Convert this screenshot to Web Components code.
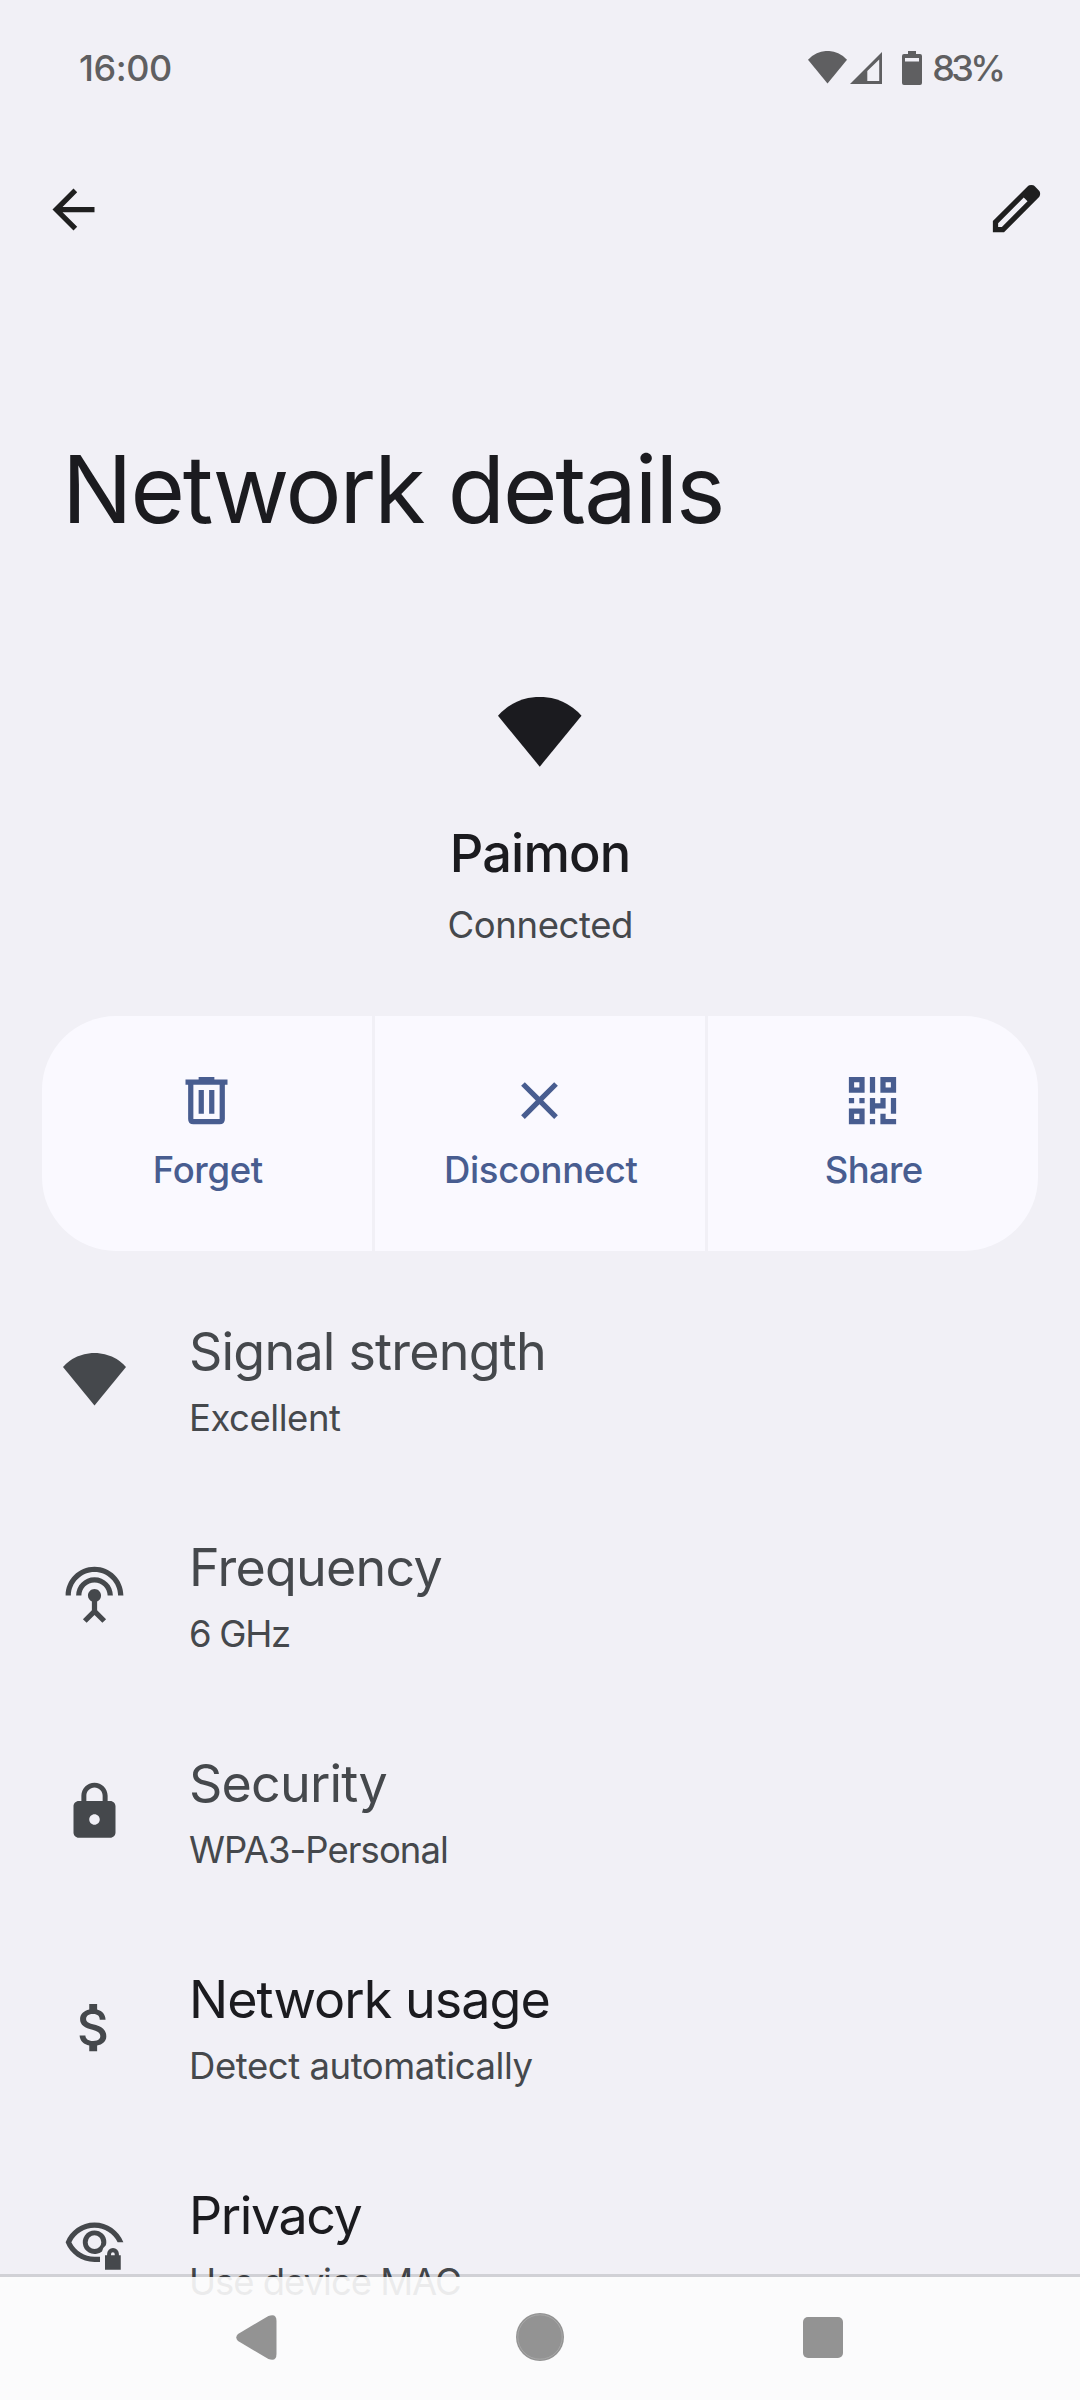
<!DOCTYPE html>
<html lang="en">
<head>
<meta charset="utf-8">
<title>Network details</title>
<style>
  html, body {
    margin: 0;
    background: #f1f0f6;
  }
  body {
    width: 1080px;
    height: 2400px;
    overflow: hidden;
    font-family: Inter, "Open Sans", sans-serif;
    color: #1b1b1f;
  }
</style>
</head>
<body>
<network-page></network-page>

<script>
(function () {
  const icons = {
    fan: ['0 0 24 20', '<path d="M12 20L0 5.38A16 16 0 0 1 24 5.38Z"/>'],
    signal: ['0 0 32 32', '<path fill-rule="evenodd" d="M0 32L32 0V32ZM17.3 29H29.2V7.4L17.3 19Z"/>'],
    battery: ['0 0 20 34', '<path fill-rule="evenodd" d="M6 0H14V3H18Q20 3 20 5V32Q20 34 18 34H2Q0 34 0 32V5Q0 3 2 3H6ZM3 7V10.6H17V7Z"/>'],
    back: ['0 0 24 24', '<path d="M20 11H7.83l5.58-5.59L12 4l-8 8 8 8 1.41-1.41L7.83 13H20z"/>'],
    edit: ['0 0 24 24', '<path fill-rule="evenodd" d="M5 19h1.425L16.2 9.225 14.775 7.8 5 17.575zM3 21v-4.25L16.2 3.575q.3-.275.663-.425t.762-.15.775.15.65.45L20.425 5q.3.275.438.65T21 6.4q0 .4-.137.763t-.438.662L7.25 21z"/>'],
    trash: ['0 0 24 24', '<path fill-rule="evenodd" d="M9 3h6v1h5v2h-1v13q0 2-2 2H7q-2 0-2-2V6H4V4h5zM7 6v13h10V6zM9 8h2v9H9zM13 8h2v9h-2z"/>'],
    close: ['0 0 24 24', '<path d="M19 6.41L17.59 5 12 10.59 6.41 5 5 6.41 10.59 12 5 17.59 6.41 19 12 13.41 17.59 19 19 17.59 13.41 12z"/>'],
    qr: ['0 0 24 24', '<path fill-rule="evenodd" d="M3 3h6v6H3zM5 5v2h2V5zM15 3h6v6h-6zM17 5v2h2V5zM3 15h6v6H3zM5 17v2h2v-2zM11 3h2v6h-2zM3 11h2v2H3zM7 11h2v2H7zM11 11h2v2h2v-2h2v4h-4v2h-2zM19 11h2v6h-2zM11 19h2v2h-2zM15 17h2v2h4v2h-6z"/>'],
    antenna: ['0 0 24 24', '<path d="M12 5c-3.87 0-7 3.13-7 7h2c0-2.76 2.24-5 5-5s5 2.24 5 5h2c0-3.87-3.13-7-7-7zm1 9.29c.88-.39 1.5-1.26 1.5-2.29 0-1.38-1.12-2.5-2.5-2.5S9.5 10.62 9.5 12c0 1.02.62 1.9 1.5 2.29v3.3L7.59 21 9 22.41l3-3 3 3L16.41 21 13 17.59v-3.3zM12 1C5.93 1 1 5.93 1 12h2c0-4.97 4.03-9 9-9s9 4.03 9 9h2c0-6.07-4.93-11-11-11z"/>'],
    lock: ['0 0 24 24', '<path d="M18 8h-1V6c0-2.76-2.24-5-5-5S7 3.24 7 6v2H6c-1.1 0-2 .9-2 2v10c0 1.1.9 2 2 2h12c1.1 0 2-.9 2-2V10c0-1.1-.9-2-2-2zm-6 9c-1.1 0-2-.9-2-2s.9-2 2-2 2 .9 2 2-.9 2-2 2zm3.1-9H8.9V6c0-1.71 1.39-3.1 3.1-3.1s3.1 1.39 3.1 3.1v2z"/>'],
    dollar: ['0 0 24 24', '<path d="M11.8 10.9c-2.27-.59-3-1.2-3-2.15 0-1.09 1.01-1.85 2.7-1.85 1.78 0 2.44.85 2.5 2.1h2.21c-.07-1.72-1.12-3.3-3.21-3.81V3h-3v2.16c-1.94.42-3.5 1.68-3.5 3.61 0 2.31 1.91 3.46 4.7 4.13 2.5.6 3 1.48 3 2.41 0 .69-.49 1.79-2.7 1.79-2.06 0-2.87-.92-2.98-2.1h-2.2c.12 2.19 1.76 3.42 3.68 3.83V21h3v-2.15c1.95-.37 3.5-1.5 3.5-3.55 0-2.84-2.43-3.81-4.7-4.4z"/>'],
    privacy: ['0 0 24 24', '<path d="M12 4C7 4 2.73 7.11 1 11.5 2.73 15.89 7 19 12 19h2.1v-2H12c-3.79 0-7.17-2.13-8.82-5.5C4.83 8.13 8.21 6 12 6s7.17 2.13 8.82 5.5H23C21.27 7.11 17 4 12 4z"/><path fill-rule="evenodd" d="M12 7a4.5 4.5 0 0 1 4.5 4.5q0 .7-.25 1.3-1.2.9-1.4 2.2A4.5 4.5 0 1 1 12 7zm0 1.9a2.6 2.6 0 1 0 0 5.200 2.6 2.6 0 0 0 0-5.200z"/><path fill-rule="evenodd" d="M16 16.5h.8V16a2.25 2.25 0 0 1 4.5 0v.5h.7V22h-6zm2.3 0h1.4V16a.7.7 0 0 0-1.4 0z"/>'],
    navBack: ['0 0 40 45', '<path d="M2 19L32 1Q40-2 40 6V39Q40 47 32 44L2 26Q-1.5 22.500 2 19Z"/>'],
    navHome: ['0 0 48 48', '<circle cx="24" cy="24" r="24"/><circle cx="24" cy="24" r="22.200" fill="none" stroke="#b4b4b4" stroke-width=".6"/>'],
    navRecent: ['0 0 40 41', '<rect width="40" height="41" rx="5"/>']
  };

  // <ui-icon name="..."> is sized by whoever places it
  class UiIcon extends HTMLElement {
    constructor() {
      super();
      this.attachShadow({ mode: 'open' });
    }

    connectedCallback() {
      const [box, shape] = icons[this.getAttribute('name')];
      this.shadowRoot.innerHTML = `
        <style>
          :host { display: block; flex: none; }
          svg { display: block; width: 100%; height: 100%; fill: currentColor; }
        </style>
        <svg viewBox="${box}" preserveAspectRatio="none">${shape}</svg>
      `;
    }
  }

  // Tracks its text so that the glyphs span the given width
  class FitText extends HTMLElement {
    constructor() {
      super();
      this.attachShadow({ mode: 'open' }).innerHTML = `
        <style>:host { display: block; white-space: nowrap; }</style>
        <slot></slot>
      `;
    }

    connectedCallback() {
      const text = this.textContent;
      const style = getComputedStyle(this);
      const ctx = document.createElement('canvas').getContext('2d');
      ctx.font = `${style.fontWeight} ${style.fontSize} ${style.fontFamily}`;
      const m = ctx.measureText(text);
      const natural = m.actualBoundingBoxRight + m.actualBoundingBoxLeft;
      const spacing = (Number(this.getAttribute('span')) - natural) / (text.length - 1);
      this.style.letterSpacing = spacing + 'px';
      this.style.marginRight = -spacing + 'px';
    }
  }

  class StatusBar extends HTMLElement {
    constructor() {
      super();
      this.attachShadow({ mode: 'open' }).innerHTML = `
        <style>
          :host {
            display: flex;
            align-items: center;
            height: 136px;
            box-sizing: border-box;
            padding: 0 74px 0 79px;
            font-size: 36px;
            font-weight: 500;
            line-height: 44px;
            color: #5f5f61;
          }
          .right { display: flex; align-items: center; margin-left: auto; }
          .wifi { width: 39px; height: 32.500px; margin-right: 3.500px; }
          .cell { width: 32px; height: 32px; margin-right: 19.500px; }
          .battery { width: 20px; height: 34px; margin-right: 10.500px; }
          .right ui-icon { margin-top: -1px; }
          .right fit-text { margin-top: -1px; }
        </style>
        <fit-text span="91">16:00</fit-text>
        <div class="right">
          <ui-icon class="wifi" name="fan"></ui-icon>
          <ui-icon class="cell" name="signal"></ui-icon>
          <ui-icon class="battery" name="battery"></ui-icon>
          <fit-text span="69">83%</fit-text>
        </div>
      `;
    }
  }

  class TopBar extends HTMLElement {
    constructor() {
      super();
      this.attachShadow({ mode: 'open' }).innerHTML = `
        <style>
          :host { display: block; color: #1f1f1f; }
          .tools {
            display: flex;
            align-items: center;
            justify-content: space-between;
            height: 147px;
            padding: 0 32px 0 42px;
          }
          .tools ui-icon { width: 63px; height: 63px; }
          .edit { margin-top: -2px; }
          h1 {
            margin: 151px 0 -1px 62px;
            font-size: 93.500px;
            font-weight: 400;
            line-height: 110px;
            color: #1b1b1f;
          }
        </style>
        <div class="tools">
          <ui-icon name="back"></ui-icon>
          <ui-icon class="edit" name="edit"></ui-icon>
        </div>
        <h1><fit-text span="651">Network details</fit-text></h1>
      `;
    }
  }

  class NetworkHeader extends HTMLElement {
    constructor() {
      super();
      this.attachShadow({ mode: 'open' }).innerHTML = `
        <style>
          :host {
            display: flex;
            flex-direction: column;
            align-items: center;
            box-sizing: border-box;
            height: 473px;
            padding-top: 154px;
          }
          ui-icon { width: 83.500px; height: 69.700px; }
          .name { margin: 54px 0 0 1px; font-size: 52.300px; font-weight: 500; line-height: 64px; }
          .state { margin: 17px 0 0 1px; font-size: 36.500px; line-height: 46px; color: #45484c; }
        </style>
        <ui-icon name="fan"></ui-icon>
        <div class="name"><fit-text span="174">Paimon</fit-text></div>
        <div class="state"><fit-text span="181.500">Connected</fit-text></div>
      `;
    }
  }

  class ActionButton extends HTMLElement {
    constructor() {
      super();
      this.attachShadow({ mode: 'open' });
    }

    connectedCallback() {
      this.shadowRoot.innerHTML = `
        <style>
          :host {
            display: flex;
            flex-direction: column;
            align-items: center;
            box-sizing: border-box;
            padding: 53px 0 0 2px;
            background: #faf9ff;
            color: #485d90;
            font-size: 36.500px;
            font-weight: 500;
            line-height: 44px;
          }
          ui-icon { width: 63px; height: 63px; margin: 0 3px 15.700px 0; }
        </style>
        <ui-icon name="${this.getAttribute('icon')}"></ui-icon>
        <slot></slot>
      `;
    }
  }

  class ActionBar extends HTMLElement {
    constructor() {
      super();
      this.attachShadow({ mode: 'open' }).innerHTML = `
        <style>
          :host {
            display: grid;
            grid-template-columns: repeat(3, 1fr);
            gap: 3px;
            height: 235px;
            margin: 0 42px;
            border-radius: 74px;
            overflow: hidden;
          }
        </style>
        <slot></slot>
      `;
    }
  }

  class PreferenceRow extends HTMLElement {
    constructor() {
      super();
      this.attachShadow({ mode: 'open' });
    }

    connectedCallback() {
      const wifi = this.getAttribute('icon') === 'fan';
      this.shadowRoot.innerHTML = `
        <style>
          :host {
            display: flex;
            align-items: center;
            gap: 63px;
            height: 216px;
            padding-left: 63px;
            color: #45484c;
          }
          ui-icon { width: 63px; height: ${wifi ? 52.5 : 63}px; margin-top: -1px; }
          .text { padding-top: 2px; }
          .title { font-size: 52px; line-height: 62px; }
          .summary { margin-top: 12.400px; font-size: 36.500px; line-height: 46px; }
          :host([active]) .title { color: #1b1b1f; }
        </style>
        <ui-icon name="${this.getAttribute('icon')}"></ui-icon>
        <div class="text">
          <div class="title"><slot name="title"></slot></div>
          <div class="summary"><slot></slot></div>
        </div>
      `;
    }
  }

  class NavBar extends HTMLElement {
    constructor() {
      super();
      this.attachShadow({ mode: 'open' }).innerHTML = `
        <style>
          :host {
            position: absolute;
            left: 0;
            top: 2274px;
            width: 1080px;
            height: 126px;
            box-sizing: border-box;
            border-top: 3px solid rgba(0, 0, 0, .13);
            background: rgba(252, 252, 252, .91);
            background-clip: padding-box;
            display: flex;
            align-items: center;
            justify-content: space-between;
            padding: 0 237px 3px 236px;
            color: #939393;
          }
          .back { width: 40.500px; height: 45px; }
          .home { width: 48px; height: 48px; }
          .recent { width: 40px; height: 41px; }
        </style>
        <ui-icon class="back" name="navBack"></ui-icon>
        <ui-icon class="home" name="navHome"></ui-icon>
        <ui-icon class="recent" name="navRecent"></ui-icon>
      `;
    }
  }

  class NetworkPage extends HTMLElement {
    constructor() {
      super();
      this.attachShadow({ mode: 'open' }).innerHTML = `
        <style>
          :host {
            display: block;
            position: relative;
            width: 1080px;
            height: 2400px;
            overflow: hidden;
          }
          .list { margin-top: 21px; }
        </style>
        <status-bar></status-bar>
        <top-bar></top-bar>
        <network-header></network-header>
        <action-bar>
          <action-button icon="trash"><fit-text span="108">Forget</fit-text></action-button>
          <action-button icon="close"><fit-text span="191.500">Disconnect</fit-text></action-button>
          <action-button icon="qr"><fit-text span="96">Share</fit-text></action-button>
        </action-bar>
        <div class="list">
          <preference-row icon="fan">
            <fit-text slot="title" span="352">Signal strength</fit-text>
            <fit-text span="149">Excellent</fit-text>
          </preference-row>
          <preference-row icon="antenna">
            <fit-text slot="title" span="248.500">Frequency</fit-text>
            <fit-text span="98">6 GHz</fit-text>
          </preference-row>
          <preference-row icon="lock">
            <fit-text slot="title" span="195.500">Security</fit-text>
            <fit-text span="258">WPA3-Personal</fit-text>
          </preference-row>
          <preference-row icon="dollar" active>
            <fit-text slot="title" span="355.500">Network usage</fit-text>
            <fit-text span="340.500">Detect automatically</fit-text>
          </preference-row>
          <preference-row icon="privacy" active>
            <fit-text slot="title" span="168.500">Privacy</fit-text>
            <fit-text span="268">Use device MAC</fit-text>
          </preference-row>
        </div>
        <nav-bar></nav-bar>
      `;
    }
  }

  customElements.define('network-page', NetworkPage);
  customElements.define('status-bar', StatusBar);
  customElements.define('top-bar', TopBar);
  customElements.define('network-header', NetworkHeader);
  customElements.define('action-bar', ActionBar);
  customElements.define('action-button', ActionButton);
  customElements.define('preference-row', PreferenceRow);
  customElements.define('nav-bar', NavBar);
  customElements.define('ui-icon', UiIcon);
  customElements.define('fit-text', FitText);
})();
</script>
</body>
</html>
